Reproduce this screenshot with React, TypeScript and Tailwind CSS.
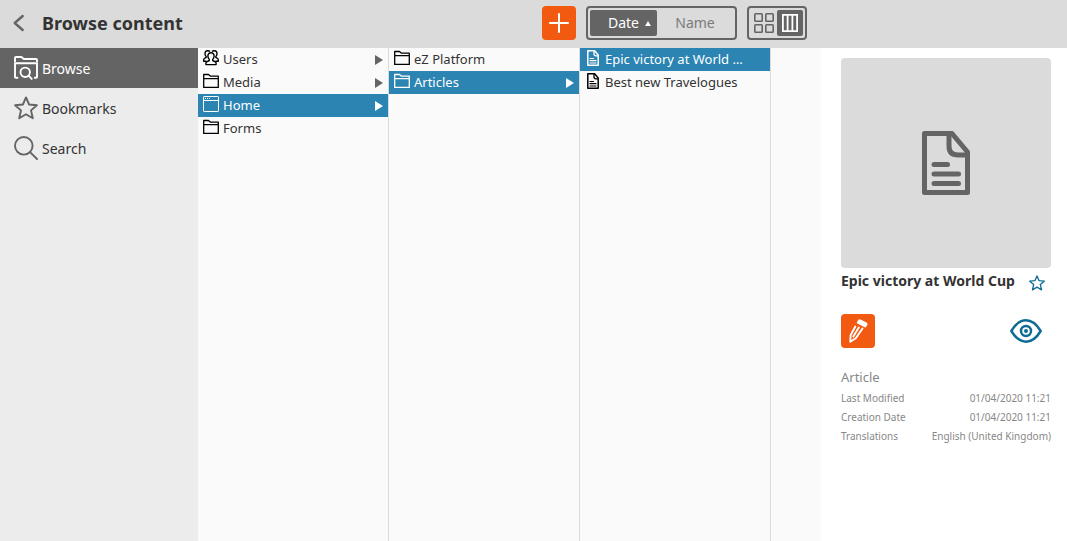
import type { ReactNode } from 'react';

type IconName = 'users' | 'folder' | 'home' | 'file';

interface FinderItem {
  name: string;
  icon: IconName;
  selected?: boolean;
  hasChildren?: boolean;
}

const columns: FinderItem[][] = [
  [
    { name: 'Users', icon: 'users', hasChildren: true },
    { name: 'Media', icon: 'folder', hasChildren: true },
    { name: 'Home', icon: 'home', hasChildren: true, selected: true },
    { name: 'Forms', icon: 'folder' },
  ],
  [
    { name: 'eZ Platform', icon: 'folder' },
    { name: 'Articles', icon: 'folder', hasChildren: true, selected: true },
  ],
  [
    { name: 'Epic victory at World Cup', icon: 'file', selected: true },
    { name: 'Best new Travelogues', icon: 'file' },
  ],
];

const details = [
  { label: 'Last Modified', value: '01/04/2020 11:21' },
  { label: 'Creation Date', value: '01/04/2020 11:21' },
  { label: 'Translations', value: 'English (United Kingdom)' },
];

const STAR = 'M12 1.4l3.1 7.1 7.8.7-5.9 5.2 1.8 7.8L12 18.3l-6.8 3.9L7 14.4 1.1 9.2l7.8-.7L12 1.4z';

function FileIcon({ className }: { className: string }) {
  return (
    <svg className={className} viewBox="0 0 64 64" fill="none" stroke="currentColor" strokeWidth="5" aria-hidden="true">
      <path strokeLinejoin="round" d="M10.5 2.5H38L53.5 21V61.5H10.5z" />
      <path d="M35 3V15Q35 24 44 24H54" />
      <path strokeLinecap="round" d="M20 33.5H33.5M20 43H44.5M20 52.5H44.5" />
    </svg>
  );
}

function ItemIcon({ name }: { name: IconName }) {
  if (name === 'file') {
    return (
      <svg className="h-4 w-4 shrink-0" viewBox="0 0 16 16" fill="none" stroke="currentColor" aria-hidden="true">
        <path strokeWidth="1.5" strokeLinejoin="round" d="M2.8.8H9.6L13.2 5V15.2H2.8z" />
        <path strokeWidth="1.3" d="M9 1V3.8Q9 5.9 11 5.9H13.3" />
        <path strokeWidth="1.2" strokeLinecap="round" d="M5 8.5H8.5M5 10.7H11M5 13H11" />
      </svg>
    );
  }
  if (name === 'home') {
    return (
      <svg className="h-4 w-4 shrink-0" viewBox="0 0 16 16" fill="none" stroke="currentColor" aria-hidden="true">
        <rect x=".5" y=".5" width="15" height="15" rx=".6" />
        <path d="M.5 4.5H15.5" />
        <path d="M2 2.5H3M4 2.5H5M6 2.5H7" />
      </svg>
    );
  }
  if (name === 'users') {
    return (
      <svg
        className="h-4 w-4 shrink-0"
        viewBox="0 0 16 16"
        fill="none"
        stroke="currentColor"
        strokeWidth="1.4"
        strokeLinejoin="round"
        aria-hidden="true"
      >
        <path d="M8 2.8C6 2.8 4.8 4.2 4.9 6.2c.1 1.5.7 2.4 1.4 3.2v1.1l-2.6 1.3c-.6.3-.8.8-.8 1.5v1.3h10.200v-1.300c0-.7-.2-1.200-.8-1.500L9.700 10.500V9.400C10.400 8.600 11 7.700 11.100 6.200c.1-2-1.100-3.400-3.100-3.400z" />
        <path d="M7 1.500C6.400.9 5.600.7 4.700.7 2.900.7 1.900 2 2 3.700c.1 1.200.5 2.200 1.200 2.900v.7L1.400 8.500c-.5.300-.7.700-.7 1.300v1.500h2.900" />
        <path d="M9 1.500C9.600.9 10.400.7 11.300.7c1.800 0 2.800 1.300 2.700 3-.1 1.200-.5 2.200-1.200 2.900v.7l1.800 1.200c.5.300.7.700.7 1.300v1.500h-2.900" />
      </svg>
    );
  }
  return (
    <svg
      className="h-4 w-4 shrink-0"
      viewBox="0 0 16 16"
      fill="none"
      stroke="currentColor"
      strokeWidth="1.3"
      strokeLinejoin="round"
      aria-hidden="true"
    >
      <path d="M.7 5.4V1.5H5.5L7.500 3.200H15.300V5.400" />
      <path d="M.7 5.6H15.3V14.4H.7z" />
    </svg>
  );
}

function FinderRow({ item }: { item: FinderItem }) {
  return (
    <li>
      <button
        type="button"
        className={`flex h-[23px] w-full items-center px-[5px] text-left text-[13px] ${
          item.selected ? 'bg-[#2b84b1] text-white' : 'text-black'
        }`}
      >
        <span className="self-start pt-[2px]">
          <ItemIcon name={item.icon} />
        </span>
        <span className={`min-w-0 flex-1 truncate pl-1 pr-4 ${item.selected ? 'text-white' : 'text-[#333]'}`}>{item.name}</span>
        {item.hasChildren && (
          <svg
            className={`h-[10px] w-2 shrink-0 ${item.selected ? 'text-white' : 'text-[#646464]'}`}
            viewBox="0 0 8 10"
            fill="currentColor"
            aria-hidden="true"
          >
            <path d="M0 0L8 5 0 10z" />
          </svg>
        )}
      </button>
    </li>
  );
}

function Tab({ label, active, children }: { label: string; active?: boolean; children: ReactNode }) {
  return (
    <li>
      <button
        type="button"
        className={`flex h-10 w-full items-center gap-1 pl-[14px] text-sm ${active ? 'bg-[#646464] text-white' : 'text-[#646464]'}`}
      >
        <svg className="h-6 w-6 shrink-0" viewBox="0 0 24 24" fill="none" stroke="currentColor" strokeWidth="1.9" aria-hidden="true">
          {children}
        </svg>
        <span className={`pt-[2px] ${active ? 'text-white' : 'text-[#333]'}`}>{label}</span>
      </button>
    </li>
  );
}

export default function App() {
  return (
    <div className="flex min-h-screen flex-col bg-white font-['Noto_Sans',sans-serif] text-[#333]">
      <header className="flex h-12 shrink-0 items-start bg-[#dbdbdb]">
        <div className="flex h-[46px] min-w-0 flex-1 items-center pl-3">
          <button type="button" aria-label="Back" className="pr-4 text-[#646464]">
            <svg
              className="h-[18px] w-[14px]"
              viewBox="0 0 14 18"
              fill="none"
              stroke="currentColor"
              strokeWidth="2.4"
              strokeLinecap="round"
              strokeLinejoin="round"
            >
              <path d="M10.7 2L2.7 9l8 7" />
            </svg>
          </button>
          <h1 className="truncate text-lg font-bold">Browse content</h1>
        </div>

        <div className="flex shrink-0 gap-[10px] pr-[14px] pt-[6px]">
          <button
            type="button"
            aria-label="Create content"
            className="flex h-[34px] w-[34px] items-center justify-center rounded bg-[#f15a10] text-white"
          >
            <svg className="h-5 w-5" viewBox="0 0 20 20" fill="none" stroke="currentColor" strokeWidth="2" strokeLinecap="round">
              <path d="M10 1V19M1 10H19" />
            </svg>
          </button>
          <div className="flex h-[34px] w-[151px] rounded border-2 border-[#646464] p-[2px] text-sm">
            <button
              type="button"
              className="flex w-[67px] items-center justify-end gap-[6px] rounded-xs bg-[#646464] pr-[6px] text-white"
            >
              Date
              <svg className="h-[5px] w-[6px]" viewBox="0 0 6 5" fill="currentColor" aria-hidden="true">
                <path d="M0 5L3 0 6 5z" />
              </svg>
            </button>
            <button type="button" className="flex-1 text-[#7a7a7a]">
              Name
            </button>
          </div>
          <div className="flex h-[34px] w-[60px] rounded border-2 border-[#646464] p-[2px]">
            <button type="button" aria-label="Grid view" className="flex w-[26px] items-center justify-center text-[#646464]">
              <svg className="h-5 w-5" viewBox="0 0 20 20" fill="none" stroke="currentColor" strokeWidth="1.6">
                <rect x=".8" y=".8" width="7.4" height="7.4" rx=".8" />
                <rect x="11.8" y=".8" width="7.4" height="7.4" rx=".8" />
                <rect x=".8" y="11.8" width="7.4" height="7.4" rx=".8" />
                <rect x="11.8" y="11.8" width="7.4" height="7.4" rx=".8" />
              </svg>
            </button>
            <button
              type="button"
              aria-label="Finder view"
              aria-pressed="true"
              className="flex flex-1 items-center justify-center rounded-xs bg-[#646464] text-white"
            >
              <svg className="h-[18px] w-4" viewBox="0 0 16 18" fill="none" stroke="currentColor" strokeWidth="1.8">
                <path d="M.9.9H15.1V17.1H.9zM5.6 1V17M10.4 1V17" />
              </svg>
            </button>
          </div>
        </div>
        <div className="w-[246px] shrink-0" />
      </header>

      <div className="flex flex-1">
        <nav className="w-[198px] shrink-0 bg-[#ececec]">
          <ul>
            <Tab label="Browse" active>
              <path d="M1 5.9V1.9Q1 1 1.9 1H7.4L9.8 3H22.1Q23 3 23 4V5.900" />
              <path strokeLinecap="round" d="M3.5 21.8H1.9Q1 21.8 1 21V7.2H23V21Q23 21.8 22.1 21.8H20.8" />
              <circle cx="11.2" cy="16.3" r="4.7" />
              <path strokeLinecap="round" d="M14.8 19.8L17.7 22.9" />
            </Tab>
            <Tab label="Bookmarks">
              <path strokeLinejoin="round" d={STAR} />
            </Tab>
            <Tab label="Search">
              <circle cx="9.8" cy="9.8" r="8.8" />
              <path strokeLinecap="round" d="M16.3 16.3L23 23" />
            </Tab>
          </ul>
        </nav>

        <main className="flex min-w-0 flex-1 overflow-hidden bg-[#fafafa]">
          {columns.map((items, index) => (
            <ul key={index} className="w-[191px] shrink-0 border-r border-[#dbdbdb]">
              {items.map((item) => (
                <FinderRow key={item.name} item={item} />
              ))}
            </ul>
          ))}
        </main>

        <aside className="w-[246px] shrink-0 bg-white pl-5 pr-4 pt-[10px]">
          <div className="flex aspect-square items-center justify-center rounded bg-[#dbdbdb] text-[#646464]">
            <FileIcon className="h-16 w-16" />
          </div>
          <div className="flex items-start justify-between pr-[6px] pt-[3px]">
            <h2 className="whitespace-nowrap text-sm font-bold">Epic victory at World Cup</h2>
            <button type="button" aria-label="Add to bookmarks" className="pt-1 text-[#0f6d95]">
              <svg className="h-4 w-4" viewBox="0 0 24 24" fill="none" stroke="currentColor" strokeWidth="2" strokeLinejoin="round">
                <path d={STAR} />
              </svg>
            </button>
          </div>
          <div className="flex items-center justify-between pr-[9px] pt-[23px]">
            <button
              type="button"
              aria-label="Edit"
              className="flex h-[34px] w-[34px] items-center justify-center rounded bg-[#f15a10] text-white"
            >
              <svg
                className="h-6 w-6"
                viewBox="0 0 24 24"
                fill="none"
                stroke="currentColor"
                strokeWidth="1.9"
                strokeLinecap="round"
                strokeLinejoin="round"
              >
                <path d="M9.300 7.500L4.600 16.200 4.300 22.700 9.800 19.300 16.500 9.500" />
                <path d="M12.800 8.600L7.300 17.600" />
                <path fill="currentColor" d="M12.900 1.700Q13.300.9 14.100 1.300L20 4.300Q20.800 4.800 20.400 5.600L19.200 7.400 11.800 3.700z" />
              </svg>
            </button>
            <button type="button" aria-label="Preview" className="text-[#0f6d95]">
              <svg className="h-6 w-8" viewBox="0 0 32 24" fill="none" stroke="currentColor" strokeWidth="2.5">
                <path strokeLinejoin="round" d="M1.3 12C5.5 5 10.5 1.3 16 1.3S26.5 5 30.7 12C26.5 19 21.5 22.7 16 22.7S5.5 19 1.3 12z" />
                <circle cx="16" cy="12" r="5" />
                <circle cx="16" cy="12" r="2" fill="currentColor" stroke="none" />
              </svg>
            </button>
          </div>
          <p className="pb-[2px] pt-[19px] text-[13px] leading-5 text-[#878787]">Article</p>
          <table className="w-full text-[10px] leading-[19px] text-[#878787]">
            <tbody>
              {details.map(({ label, value }) => (
                <tr key={label}>
                  <th scope="row" className="text-left font-normal">
                    {label}
                  </th>
                  <td className="text-right">{value}</td>
                </tr>
              ))}
            </tbody>
          </table>
        </aside>
      </div>
    </div>
  );
}
